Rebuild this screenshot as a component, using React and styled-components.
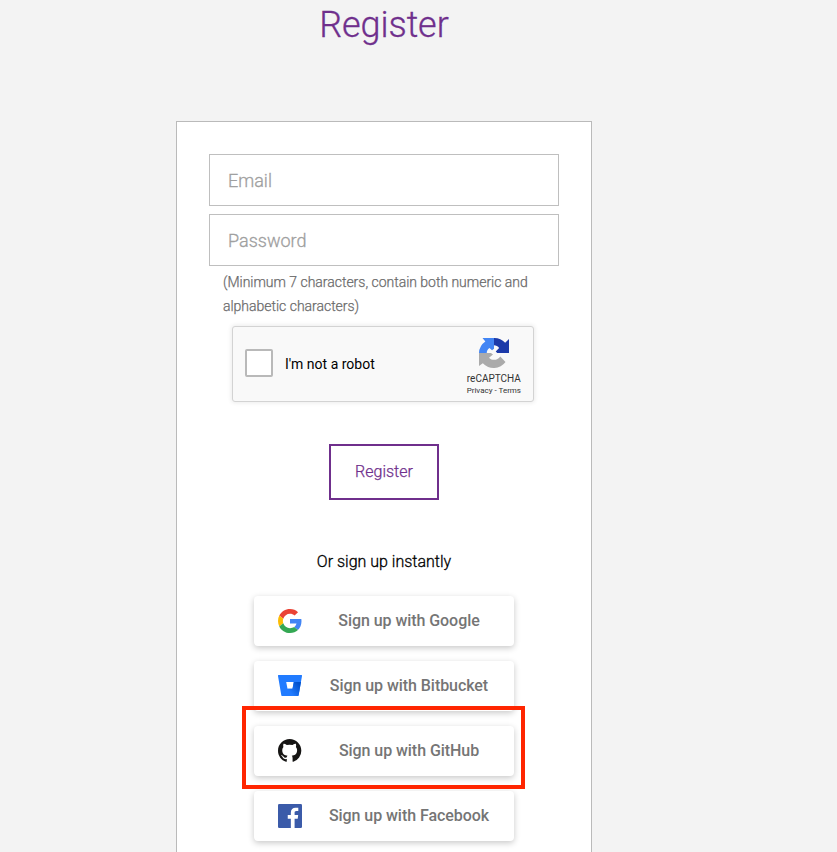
import React from "react";
import styled, { createGlobalStyle } from "styled-components";

const GlobalStyle = createGlobalStyle`
  *, *::before, *::after { box-sizing: border-box; }
  html, body { margin: 0; height: 100%; overflow: hidden; }
  body { background: #f3f3f3; font-family: Roboto, "Liberation Sans", sans-serif; color: #000; }
  button, input { font-family: inherit; }
`;

const Page = styled.main`
  height: 852px;
  width: 768px;
  overflow: hidden;
  display: flex;
  flex-direction: column;
  align-items: center;
`;

const Title = styled.h1`
  flex: none;
  margin: 0;
  padding-top: 3px;
  height: 121px;
  font-size: 36px;
  line-height: 45px;
  font-weight: 300;
  letter-spacing: -0.1px;
  -webkit-text-stroke: 0.3px;
  color: #6f2f8c;
`;

const Panel = styled.form`
  flex: none;
  width: 416px;
  height: 800px;
  padding: 32px;
  background: #fff;
  border: 1px solid #bababa;
  display: flex;
  flex-direction: column;
  align-items: center;
`;

const Field = styled.input`
  flex: none;
  width: 350px;
  height: 52px;
  margin-bottom: 8px;
  padding: 0 18px;
  border: 1px solid #bfbfbf;
  border-radius: 0;
  font-size: 18px;
  font-weight: 300;
  outline: none;
  &::placeholder { color: #a0a0a0; opacity: 1; -webkit-text-stroke: 0.3px; }
`;

const Hint = styled.p`
  margin: -4px 0 0;
  width: 322px;
  height: 56px;
  font-size: 14px;
  line-height: 24px;
  color: #6c6c6c;
  font-weight: 300;
  letter-spacing: -0.02px;
  -webkit-text-stroke: 0.25px;
  white-space: nowrap;
`;

const Captcha = styled.div`
  flex: none;
  width: 302px;
  height: 76px;
  margin-left: -2px;
  padding: 0 12px;
  display: flex;
  align-items: center;
  background: #f9f9f9;
  border: 1px solid #d3d3d3;
  border-radius: 3px;
  box-shadow: 0 0 4px 1px rgba(0, 0, 0, 0.08);
`;

const CheckBox = styled.span`
  width: 28px;
  height: 28px;
  margin: -2px 12px 0 0;
  border: 2px solid #b9b9b9;
  border-radius: 2px;
  background: #fff;
`;

const CaptchaLabel = styled.span`
  flex: 1;
  font-size: 14px;
  line-height: 17px;
`;

const Brand = styled.div`
  display: flex;
  flex-direction: column;
  align-items: center;
  color: #333;
  font-size: 10px;
  line-height: 12px;
  padding-top: 4px;

  svg { margin-bottom: 4px; }
`;

const BrandLinks = styled.span`
  font-size: 8px;
  line-height: 11px;
`;

const Submit = styled.button`
  flex: none;
  width: 110px;
  height: 56px;
  margin-top: 42px;
  padding: 0 0 2px;
  border: 2px solid #6f2f8c;
  background: #fff;
  color: #6f2f8c;
  font-size: 16px;
  font-weight: 300;
  -webkit-text-stroke: 0.25px;
`;

const Divider = styled.p`
  margin: 50px 0 23px;
  font-size: 16px;
  line-height: 23px;
  font-weight: 300;
  -webkit-text-stroke: 0.3px;
`;

const Providers = styled.div`
  display: flex;
  flex-direction: column;
  gap: 15px;
`;

const ProviderSlot = styled.div`
  position: relative;
  height: 50px;
`;

const ProviderButton = styled.button`
  width: 260px;
  height: 50px;
  padding: 0 0 0 24px;
  display: flex;
  align-items: center;
  border: 0;
  border-radius: 4px;
  background: #fff;
  box-shadow: 0 2px 6px rgba(0, 0, 0, 0.22);
  color: #757575;
  font-size: 16px;
  font-weight: 500;

  svg { flex: none; display: block; }
`;

const ProviderLabel = styled.span`
  flex: 1;
  padding-left: 2px;
  text-align: center;
  line-height: 20px;
  letter-spacing: -0.06px;
`;

const Highlight = styled.div`
  position: absolute;
  z-index: 1;
  left: -12px;
  top: -20px;
  width: 283px;
  height: 83px;
  border: 4px solid #ff2500;
  pointer-events: none;
`;

const GoogleIcon = () => (
  <svg width="24" height="24" viewBox="0 0 48 48">
    <path fill="#EA4335" d="M24 9.5c3.54 0 6.71 1.22 9.21 3.6l6.85-6.85C35.9 2.38 30.47 0 24 0 14.62 0 6.51 5.38 2.56 13.22l7.98 6.19C12.43 13.72 17.74 9.5 24 9.5z" />
    <path fill="#4285F4" d="M46.98 24.55c0-1.57-.15-3.09-.38-4.55H24v9.02h12.94c-.58 2.96-2.26 5.48-4.78 7.18l7.73 6c4.51-4.18 7.09-10.36 7.09-17.65z" />
    <path fill="#FBBC05" d="M10.53 28.59c-.48-1.45-.76-2.99-.76-4.59s.27-3.14.76-4.59l-7.98-6.19C.92 16.46 0 20.12 0 24c0 3.88.92 7.54 2.56 10.78l7.97-6.19z" />
    <path fill="#34A853" d="M24 48c6.48 0 11.93-2.13 15.89-5.81l-7.73-6c-2.15 1.45-4.92 2.3-8.16 2.3-6.26 0-11.57-4.22-13.47-9.91l-7.98 6.19C6.51 42.62 14.62 48 24 48z" />
  </svg>
);

const BitbucketIcon = () => (
  <svg width="24" height="24" viewBox="0 0 24 24">
    <defs>
      <linearGradient id="bucket-shade" x1="23" y1="9" x2="12" y2="18" gradientUnits="userSpaceOnUse">
        <stop offset=".15" stopColor="#0050cb" />
        <stop offset="1" stopColor="#217bff" />
      </linearGradient>
    </defs>
    <path fill="#217bff" d="M.8 1A.75.75 0 0 0 0 1.9l3.25 19.2a1 1 0 0 0 1 .9h15.6a.75.75 0 0 0 .75-.64L24 1.9a.75.75 0 0 0-.8-.9zM14.5 14.7h-5L8.2 8h7.6z" />
    <path fill="url(#bucket-shade)" d="M23 8h-7.2l-1.3 6.7h-5L3.6 21.7c.2.2.4.3.7.3h15.6a.75.75 0 0 0 .7-.64z" />
  </svg>
);

const GitHubIcon = () => (
  <svg width="24" height="24" viewBox="0 0 24 24">
    <path fill="#161514" d="M11.65 0C5.22 0 0 5.22 0 11.66c0 5.15 3.34 9.52 7.97 11.06.58.11.8-.25.8-.56v-2.17c-3.25.7-3.93-1.38-3.93-1.38-.53-1.35-1.3-1.7-1.3-1.7-1.06-.73.08-.71.08-.71 1.18.08 1.79 1.2 1.79 1.2 1.04 1.79 2.73 1.27 3.4.97.1-.75.4-1.27.74-1.56-2.6-.3-5.32-1.3-5.32-5.77 0-1.27.46-2.31 1.2-3.12-.12-.3-.52-1.49.11-3.09 0 0 .98-.31 3.21 1.19a11.2 11.2 0 0 1 5.84 0c2.22-1.5 3.2-1.19 3.2-1.19.64 1.6.24 2.79.12 3.09.75.81 1.2 1.85 1.2 3.12 0 4.48-2.73 5.46-5.34 5.75.42.36.8 1.07.8 2.16v3.2c0 .31.2.68.8.56a11.66 11.66 0 0 0 7.96-11.05C23.33 5.22 18.1 0 11.65 0z" />
  </svg>
);

const FacebookIcon = () => (
  <svg width="24" height="24" viewBox="0 0 24 24">
    <rect width="24" height="24" rx="1.3" fill="#3b5ba9" />
    <path fill="#fff" d="M16.6 24v-9.3h3.1l.47-3.6H16.6V8.8c0-1.05.3-1.75 1.8-1.75h1.9V3.8a26 26 0 0 0-2.8-.14c-2.76 0-4.65 1.68-4.65 4.78v2.66H9.75v3.6h3.1V24z" />
  </svg>
);

const CaptchaLogo = () => (
  <svg width="32" height="32" viewBox="0 0 64 64">
    <path fill="#1c3aa9" d="M62 32V4l-7.7 7.7A29 29 0 0 0 32 2v14.5c4 0 8 1.7 10.2 5.4L35.5 29l3 3z" />
    <path fill="#4285f4" d="M32 2H9l5.7 7A29 29 0 0 0 2 32h15.5c0-4 1.7-8 5.4-10.2l5.2 4.7L32 23.5z" />
    <path fill="#ababab" d="M2 32v26l7.7-5.5A29 29 0 0 0 55 50L44.5 39C39 47 28.5 48 22 41.3l8-6.2L25.8 32z" />
  </svg>
);

const providers = [
  { name: "Google", Icon: GoogleIcon },
  { name: "Bitbucket", Icon: BitbucketIcon },
  { name: "GitHub", Icon: GitHubIcon, highlighted: true },
  { name: "Facebook", Icon: FacebookIcon },
];

export default function App() {
  return (
    <>
      <GlobalStyle />
      <Page>
        <Title>Register</Title>
        <Panel>
          <Field type="email" placeholder="Email" />
          <Field type="password" placeholder="Password" />
          <Hint>
            (Minimum 7 characters, contain both numeric and
            <br />
            alphabetic characters)
          </Hint>
          <Captcha>
            <CheckBox />
            <CaptchaLabel>I'm not a robot</CaptchaLabel>
            <Brand>
              <CaptchaLogo />
              <span>reCAPTCHA</span>
              <BrandLinks>Privacy - Terms</BrandLinks>
            </Brand>
          </Captcha>
          <Submit type="button">Register</Submit>
          <Divider>Or sign up instantly</Divider>
          <Providers>
            {providers.map(({ name, Icon, highlighted }) => (
              <ProviderSlot key={name}>
                <ProviderButton type="button">
                  <Icon />
                  <ProviderLabel>Sign up with {name}</ProviderLabel>
                </ProviderButton>
                {highlighted && <Highlight />}
              </ProviderSlot>
            ))}
          </Providers>
        </Panel>
      </Page>
    </>
  );
}
